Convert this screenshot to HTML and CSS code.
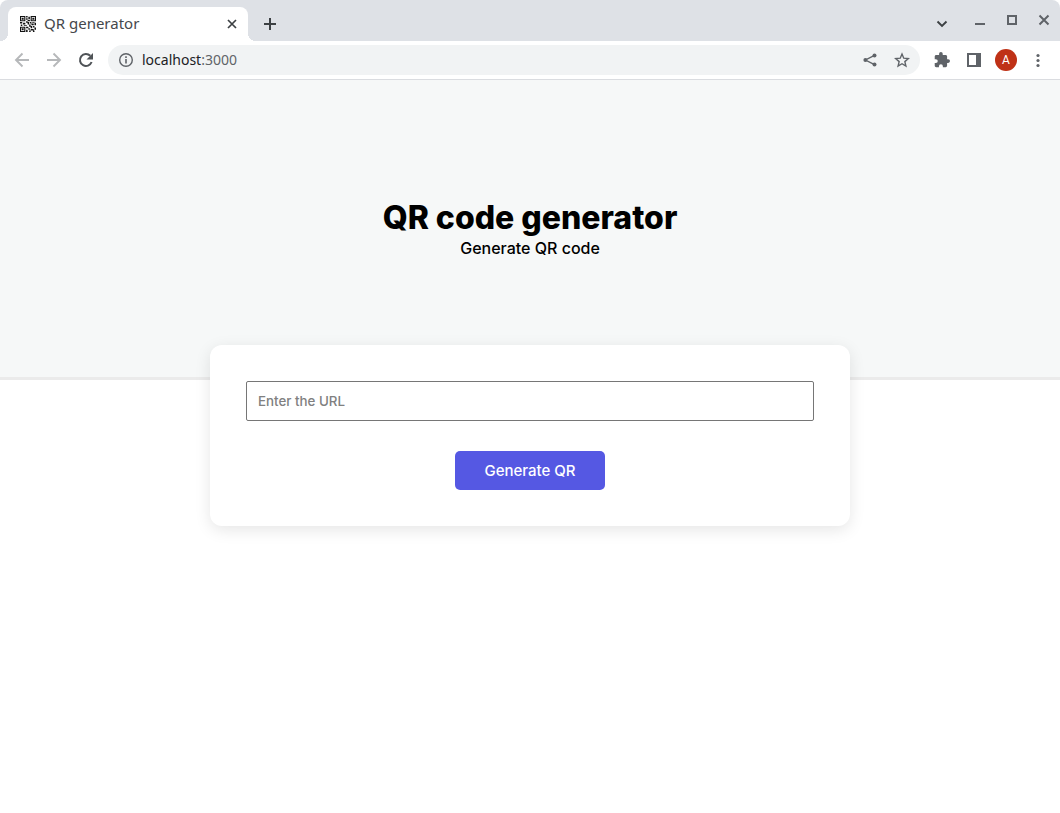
FILE: index.html
```html
<!DOCTYPE html>
<html lang="en">
<head>
<meta charset="utf-8">
<title>QR generator</title>
<link rel="stylesheet" href="styles.css">
</head>
<body>
<div class="window">
  <header class="chrome">
    <div class="tabstrip">
      <div class="tab">
        <svg class="favicon" width="16" height="16" viewBox="0 0 21 21" aria-hidden="true">
          <path fill="none" stroke="#111" stroke-width="1.5" d="M.7.7h5.6v5.6H.7zM14.7.7h5.6v5.6h-5.6zM.7 14.7h5.6v5.6H.7z"/>
          <path fill="#111" d="M2.2 2.2h2.6v2.6H2.2zM16.2 2.2h2.6v2.6h-2.6zM2.2 16.2h2.6v2.6H2.2zM8 0h2v2H8zM11 1h2v3h-2zM8 3h2v2H8zM10 5h3v2h-3zM8 7h2v2H8zM0 8h3v2H0zM4 9h3v2H4zM1 11h2v2H1zM5 12h4v1H5zM10 8h2v3h-2zM13 8h2v2h-2zM16 8h3v1h-3zM19 9h2v3h-2zM15 10h3v2h-3zM12 11h2v3h-2zM8 14h3v2H8zM14 13h2v3h-2zM17 13h2v2h-2zM19 15h2v3h-2zM11 16h2v2h-2zM8 18h2v3H8zM14 17h4v2h-4zM12 19h2v2h-2zM17 19h2v2h-2z"/>
        </svg>
        <span class="tab-title">QR generator</span>
        <button class="tab-close" aria-label="Close tab"><svg width="16" height="16" viewBox="0 0 16 16"><path d="M4 4l8 8M12 4l-8 8" stroke="#3c4043" stroke-width="1.7"/></svg></button>
      </div>
      <button class="icon-btn new-tab" aria-label="New tab"><svg width="16" height="16" viewBox="0 0 16 16"><path d="M8 2v12M2 8h12" stroke="#3c4043" stroke-width="2"/></svg></button>
      <div class="window-controls">
        <button class="icon-btn search-tabs" aria-label="Search tabs"><svg width="16" height="16" viewBox="0 0 16 16"><path d="M3.5 6.500L8 11l4.500-4.500" fill="none" stroke="#3c4043" stroke-width="1.900"/></svg></button>
        <button class="icon-btn" aria-label="Minimize"><svg width="16" height="16" viewBox="0 0 16 16"><path d="M3 12h10" stroke="#5f6368" stroke-width="2"/></svg></button>
        <button class="icon-btn" aria-label="Maximize"><svg width="16" height="16" viewBox="0 0 16 16"><path d="M4 4h8v8H4z" fill="none" stroke="#5f6368" stroke-width="2"/></svg></button>
        <button class="icon-btn" aria-label="Close"><svg width="16" height="16" viewBox="0 0 16 16"><path d="M3.500 3.500l9 9M12.500 3.500l-9 9" stroke="#5f6368" stroke-width="2"/></svg></button>
      </div>
    </div>
    <div class="toolbar">
      <div class="nav">
        <button class="icon-btn" aria-label="Back"><svg width="16" height="16" viewBox="0 0 16 16"><path d="M15 8H2M8.500 1.500L2 8l6.500 6.500" fill="none" stroke="#b6b8ba" stroke-width="1.900"/></svg></button>
        <button class="icon-btn" aria-label="Forward"><svg width="16" height="16" viewBox="0 0 16 16"><path d="M1 8h13M7.500 1.500L14 8l-6.500 6.500" fill="none" stroke="#b6b8ba" stroke-width="1.900"/></svg></button>
        <button class="icon-btn" aria-label="Reload"><svg width="16" height="16" viewBox="0 0 16 16"><path d="M13.600 10A6 6 0 1 1 12.300 3.800" fill="none" stroke="#4f5357" stroke-width="2"/><path d="M15 1v6.500H8.500z" fill="#4f5357"/></svg></button>
      </div>
      <div class="address">
        <svg width="16" height="16" viewBox="0 0 16 16" aria-hidden="true"><circle cx="8" cy="8" r="6.300" fill="none" stroke="#5f6368" stroke-width="1.400"/><path d="M8 7v4.500M8 4.300v1.600" stroke="#5f6368" stroke-width="1.600"/></svg>
        <span class="url">localhost<span class="port">:3000</span></span>
        <button class="icon-btn" aria-label="Share"><svg width="16" height="16" viewBox="0 0 16 16"><path d="M12.500 3.400L3.500 8l9 4.600" fill="none" stroke="#5f6368" stroke-width="1.400"/><circle cx="12.500" cy="3.500" r="2" fill="#5f6368"/><circle cx="3.400" cy="8" r="2" fill="#5f6368"/><circle cx="12.500" cy="12.500" r="2" fill="#5f6368"/></svg></button>
        <button class="icon-btn" aria-label="Bookmark"><svg width="16" height="16" viewBox="0 0 16 16"><path d="M8 2l1.750 4.200 4.550.4-3.450 3 1.050 4.450L8 11.700l-3.900 2.350L5.150 9.600 1.700 6.600l4.550-.4z" fill="none" stroke="#5f6368" stroke-width="1.400"/></svg></button>
      </div>
      <div class="actions">
        <button class="icon-btn" aria-label="Extensions"><svg width="16" height="16" viewBox="1 1 22 22"><path fill="#5f6368" d="M20.500 11H19V7c0-1.100-.9-2-2-2h-4V3.500a2.500 2.500 0 0 0-5 0V5H4c-1.100 0-2 .9-2 2v3.800h1.500a2.700 2.700 0 0 1 0 5.400H2V20c0 1.100.9 2 2 2h3.800v-1.500a2.700 2.700 0 0 1 5.400 0V22H17c1.100 0 2-.9 2-2v-4h1.500a2.500 2.500 0 0 0 0-5z"/></svg></button>
        <button class="icon-btn" aria-label="Side panel"><svg width="16" height="16" viewBox="0 0 16 16"><path d="M2 2h12v12H2z" fill="#fff" stroke="#5f6368" stroke-width="2"/><path d="M10 2h4v12h-4z" fill="#5f6368"/></svg></button>
        <button class="avatar" aria-label="Profile">A</button>
        <button class="icon-btn" aria-label="Menu"><svg width="16" height="16" viewBox="0 0 16 16" fill="#5f6368"><circle cx="8" cy="3.500" r="1.600"/><circle cx="8" cy="8.500" r="1.600"/><circle cx="8" cy="13.500" r="1.600"/></svg></button>
      </div>
    </div>
  </header>
  <main>
    <section class="hero">
      <h1>QR code generator</h1>
      <p>Generate QR code</p>
    </section>
    <form class="card">
      <input class="url-input" type="text" placeholder="Enter the URL" aria-label="URL">
      <button class="generate" type="button">Generate QR</button>
    </form>
  </main>
</div>
</body>
</html>
```
FILE: styles.css
```css
* {
  box-sizing: border-box;
}

body {
  margin: 0;
  background: #fff;
  color: #000;
  font-family: Inter, "Liberation Sans", sans-serif;
}

.window {
  min-height: 100vh;
}

h1,
p {
  margin: 0;
}

button {
  border: 0;
  padding: 0;
  background: none;
  font-family: inherit;
}

svg {
  display: block;
  flex: none;
}

.chrome {
  border-bottom: 1px solid #dadce0;
  font-family: "Noto Sans", "Open Sans", sans-serif;
  font-size: 14px;
}

.tabstrip {
  display: flex;
  align-items: flex-end;
  height: 41px;
  padding-left: 8px;
  background: #dee1e6;
  border-radius: 8px 8px 0 0;
}

.tab {
  position: relative;
  display: flex;
  align-items: center;
  gap: 8px;
  width: 240px;
  height: 34px;
  padding: 0 8px 0 12px;
  background: #fff;
  border-radius: 8px 8px 0 0;
  color: #45484c;
}

.tab::before,
.tab::after {
  content: "";
  position: absolute;
  bottom: 0;
  width: 8px;
  height: 8px;
}

.tab::before {
  right: 100%;
  background: radial-gradient(circle at 0 0, #dee1e6 8px, #fff 8px);
}

.tab::after {
  left: 100%;
  background: radial-gradient(circle at 100% 0, #dee1e6 8px, #fff 8px);
}

.tab-title {
  flex: 1;
  padding-bottom: 2px;
  font-size: 15px;
}

.icon-btn {
  display: grid;
  place-items: center;
  flex: none;
  width: 32px;
  height: 32px;
}

.new-tab {
  height: 34px;
  margin-left: 6px;
}

.window-controls {
  display: flex;
  align-self: flex-start;
  margin-left: auto;
  padding-top: 4px;
}

.search-tabs {
  margin-right: 6px;
  padding-top: 6px;
}

.toolbar {
  display: flex;
  align-items: center;
  height: 38px;
  padding: 0 6px;
}

.nav,
.actions {
  display: flex;
  align-items: center;
}

.address {
  display: flex;
  flex: 1;
  align-items: center;
  height: 30px;
  margin: 0 6px;
  padding: 0 2px 0 10px;
  background: #f1f3f4;
  border-radius: 15px;
}

.url {
  flex: 1;
  padding: 0 0 2px 8px;
  color: #202124;
}

.port {
  color: #5f6368;
}

.avatar {
  width: 22px;
  height: 22px;
  margin: 0 5px;
  border-radius: 50%;
  background: #bf3116;
  color: #fff;
  font-family: Roboto, sans-serif;
  font-size: 12px;
}

.hero {
  height: 300px;
  padding-top: 118px;
  background: #f6f8f8;
  border-bottom: 3px solid #ebebeb;
  text-align: center;
}

.hero h1 {
  font-size: 32px;
  font-weight: 800;
  line-height: 40px;
}

.hero p {
  font-size: 16px;
  font-weight: 500;
  line-height: 20px;
}

.card {
  position: relative;
  display: flex;
  flex-direction: column;
  align-items: center;
  gap: 30px;
  max-width: 640px;
  margin: -35px auto 0;
  padding: 36px;
  background: #fff;
  border-radius: 12px;
  box-shadow: 0 4px 16px rgba(0, 0, 0, 0.1);
}

.url-input {
  width: 100%;
  height: 40px;
  padding: 0 11px;
  border: 1px solid #767676;
  border-radius: 2px;
  font-family: inherit;
  font-weight: 500;
}

.url-input::placeholder {
  color: #808080;
}

.generate {
  width: 150px;
  height: 39px;
  border-radius: 5px;
  background: #5558e3;
  color: #fff;
  font-size: 15px;
  font-weight: 500;
}
```
